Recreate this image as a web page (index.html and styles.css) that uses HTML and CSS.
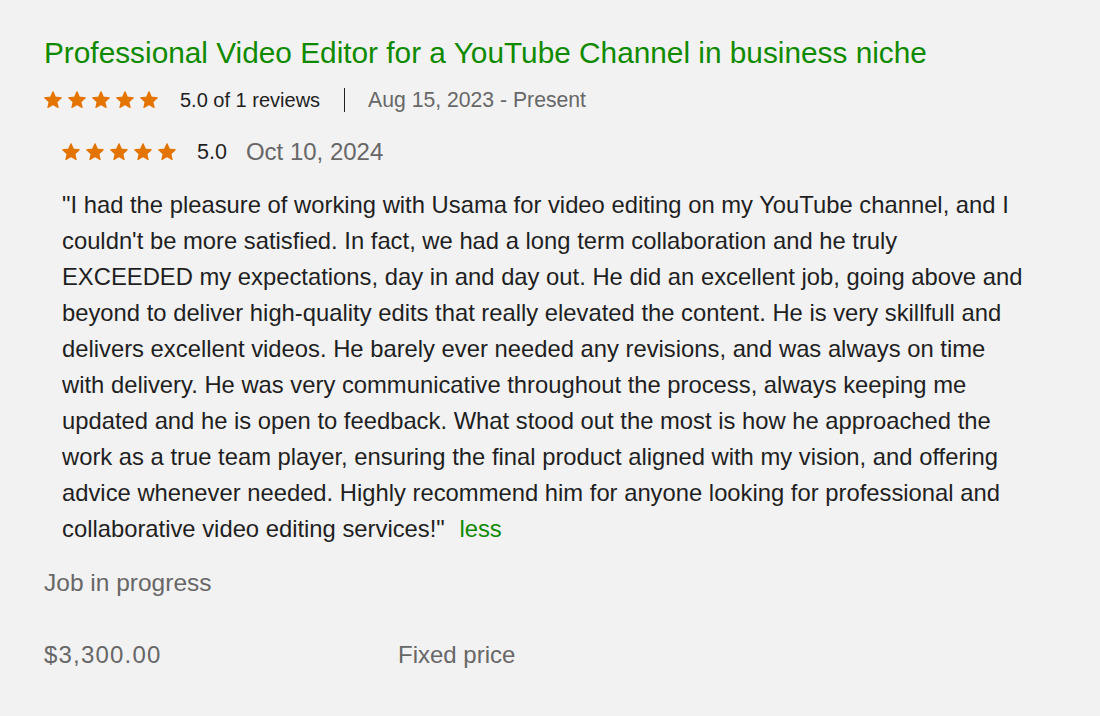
FILE: index.html
```html
<!DOCTYPE html>
<html lang="en">
<head>
    <meta charset="UTF-8">
    <meta name="viewport" content="width=device-width, initial-scale=1.0">
    <title>Work history</title>
    <link rel="stylesheet" href="styles.css">
</head>
<body>
    <div class="job">
        <h2 class="job-title">Professional Video Editor for a YouTube Channel in business niche</h2>
        <div class="job-meta">
            <span class="stars" id="job-stars"></span>
            <span class="rating-text">5.0 of 1 reviews</span>
            <span class="divider"></span>
            <span class="dates">Aug 15, 2023 - Present</span>
        </div>

        <div class="review">
            <div class="review-meta">
                <span class="stars" id="review-stars"></span>
                <span class="score">5.0</span>
                <span class="review-date">Oct 10, 2024</span>
            </div>
            <p class="review-text">"I had the pleasure of working with Usama for video editing on my YouTube channel, and I couldn't be more satisfied. In fact, we had a long term collaboration and he truly EXCEEDED my expectations, day in and day out. He did an excellent job, going above and beyond to deliver high-quality edits that really elevated the content. He is very skillfull and delivers excellent videos. He barely ever needed any revisions, and was always on time with delivery. He was very communicative throughout the process, always keeping me updated and he is open to feedback. What stood out the most is how he approached the work as a true team player, ensuring the final product aligned with my vision, and offering advice whenever needed. Highly recommend him for anyone looking for professional and collaborative video editing services!" <a href="#" class="less">less</a></p>
        </div>

        <div class="status">Job in progress</div>

        <div class="job-footer">
            <span class="price">$3,300.00</span>
            <span class="price-type">Fixed price</span>
        </div>
    </div>

    <script>
        // five star rating, drawn as svg
        const star = '<svg viewBox="0 0 24 24" width="20" height="20"><path d="M12 2.2l2.9 6.4 7 .7-5.3 4.8 1.5 6.9L12 17.4 5.9 21l1.5-6.9-5.3-4.8 7-.7z" stroke="#e37400" stroke-width="1.4" stroke-linejoin="round"/></svg>';
        ['job-stars', 'review-stars'].forEach(id => {
            document.getElementById(id).innerHTML = star.repeat(5);
        });
    </script>
</body>
</html>
```

FILE: styles.css
```css
body {
    margin: 0;
    background-color: #f2f2f2;
    font-family: "Liberation Sans", Arial, sans-serif;
    color: #1f1f1f;
}
.job {
    padding: 35px 44px 0 44px;
}
.job-title {
    margin: 0;
    font-size: 29.8px;
    font-weight: normal;
    color: #108a00;
    line-height: 36px;
}
.job-meta {
    display: flex;
    align-items: center;
    margin-top: 17px;
    height: 24px;
    font-size: 20px;
}
.stars {
    display: flex;
    gap: 4px;
    margin-left: -1px;
    fill: #e37400;
}
.rating-text {
    margin-left: 21px;
}
.divider {
    width: 1px;
    height: 24px;
    background-color: #1f1f1f;
    margin: 0 23px 0 24px;
}
.dates {
    font-size: 21.2px;
    color: #676767;
}
.review {
    padding-left: 18px;
    margin-top: 28px;
}
.review-meta {
    display: flex;
    align-items: center;
    height: 24px;
}
.score {
    margin-left: 20px;
    font-size: 21.5px;
}
.review-date {
    margin-left: 19px;
    font-size: 24px;
    color: #676767;
}
.review-text {
    margin: 23px 0 0 0;
    width: 962px;
    font-size: 23.8px;
    line-height: 36px;
}
.less {
    color: #108a00;
    text-decoration: none;
    margin-left: 8px;
}
.status {
    margin-top: 22px;
    font-size: 24.5px;
    line-height: 28px;
    color: #676767;
}
.job-footer {
    display: flex;
    margin-top: 44px;
    font-size: 24px;
    line-height: 28px;
    color: #676767;
}
.price {
    width: 354px;
    letter-spacing: 1.2px;
}
```
